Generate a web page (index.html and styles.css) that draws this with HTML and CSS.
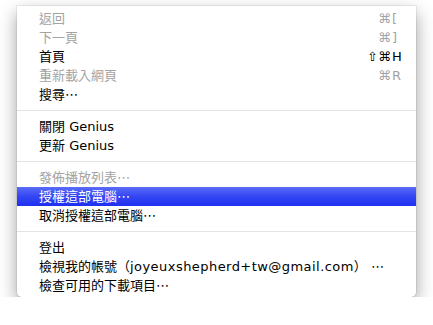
FILE: index.html
```html
<!DOCTYPE html>
<html lang="zh-Hant">
<head>
<meta charset="utf-8">
<link rel="stylesheet" href="styles.css">
</head>
<body>
<div class="stage">
  <div class="menu">
    <div class="item disabled"><span class="label">返回</span><span class="mods">⌘</span><span class="key">[</span></div>
    <div class="item disabled"><span class="label">下一頁</span><span class="mods">⌘</span><span class="key">]</span></div>
    <div class="item"><span class="label">首頁</span><span class="mods">⇧⌘</span><span class="key">H</span></div>
    <div class="item disabled"><span class="label">重新載入網頁</span><span class="mods">⌘</span><span class="key">R</span></div>
    <div class="item"><span class="label">搜尋<span class="ell">⋯</span></span></div>
    <div class="sep"></div>
    <div class="item"><span class="label">關閉 Genius</span></div>
    <div class="item"><span class="label">更新 Genius</span></div>
    <div class="sep"></div>
    <div class="item disabled"><span class="label">發佈播放列表<span class="ell">⋯</span></span></div>
    <div class="item selected"><span class="label">授權這部電腦<span class="ell">⋯</span></span></div>
    <div class="item"><span class="label">取消授權這部電腦<span class="ell">⋯</span></span></div>
    <div class="sep"></div>
    <div class="item"><span class="label">登出</span></div>
    <div class="item"><span class="label">檢視我的帳號（<span class="email">joyeuxshepherd+tw@gmail.com</span>） <span class="ell">⋯</span></span></div>
    <div class="item"><span class="label">檢查可用的下載項目<span class="ell">⋯</span></span></div>
  </div>
</div>
</body>
</html>
```

FILE: styles.css
```css
html, body {
  margin: 0;
  padding: 0;
  background: #ffffff;
}

.stage {
  padding: 6px 17px 0 17px;
}

.menu {
  width: 399px;
  box-sizing: border-box;
  background: #ffffff;
  padding: 3px 0 2px 0;
  border-radius: 0 0 5px 5px;
  box-shadow: 0 0 0 1px rgba(0, 0, 0, 0.06), 0 7px 18px rgba(0, 0, 0, 0.38);
  font-family: "DejaVu Sans", "Noto Sans CJK TC", sans-serif;
  font-size: 13px;
  color: #000000;
}

.item {
  display: flex;
  align-items: center;
  height: 19px;
  padding: 0 12px 0 22px;
  line-height: 19px;
  white-space: nowrap;
}

.label {
  flex: 1;
}

.email {
  letter-spacing: 0.45px;
}

.mods {
  text-align: right;
}

.key {
  width: 12px;
  padding-left: 1px;
}

.ell {
  font-family: "DejaVu Sans", sans-serif;
}

.disabled {
  color: #a3a3a3;
}

.selected {
  color: #ffffff;
  background: linear-gradient(#5a6cf6, #3346f4 50%, #1e2ff0);
}

.sep {
  height: 13px;
  display: flex;
  flex-direction: column;
  justify-content: flex-start;
}

.sep::before {
  content: "";
  display: block;
  margin-top: 6px;
  height: 1px;
  background: #e3e3e3;
}
```
